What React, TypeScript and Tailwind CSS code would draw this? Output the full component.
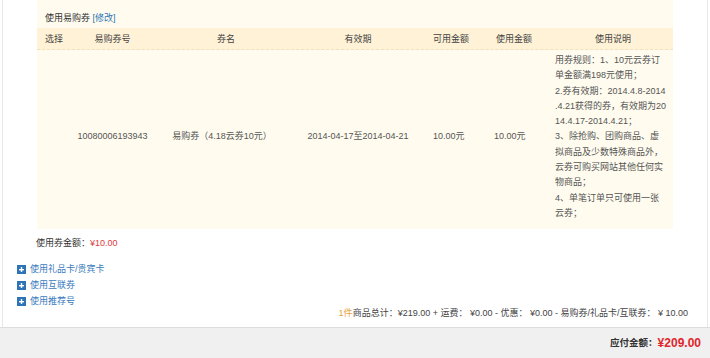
const descLines = [
  '用券规则：1、10元云券订',
  '单金额满198元使用；',
  '2.券有效期：2014.4.8-2014',
  '.4.21获得的券，有效期为20',
  '14.4.17-2014.4.21；',
  '3、除抢购、团购商品、虚',
  '拟商品及少数特殊商品外，',
  '云券可购买网站其他任何实',
  '物商品；',
  '4、单笔订单只可使用一张',
  '云券；',
];

const links = ['使用礼品卡/贵宾卡', '使用互联券', '使用推荐号'];

function PlusIcon() {
  return (
    <svg width="9" height="9" viewBox="0 0 9 9" className="shrink-0">
      <rect x="0" y="0" width="9" height="9" fill="#2c74b6" />
      <rect x="2" y="4" width="5" height="1.4" fill="#fff" />
      <rect x="3.8" y="2" width="1.4" height="5" fill="#fff" />
    </svg>
  );
}

export default function App() {
  return (
    <div
      className="w-[710px] h-[358px] bg-white overflow-hidden flex flex-col text-[9px] text-[#444]"
      style={{ fontFamily: '"Liberation Sans", "Noto Sans CJK SC", sans-serif' }}
    >
      <div className="flex-1 px-[2px]">
        <div className="h-full border-l border-r border-[#e8e8e8] flex flex-col">
          {/* Coupon box */}
          <div className="ml-[34px] w-[636px] bg-[#fffcef]">
            <div className="h-[28px] pt-[12px] pl-[8px] leading-[12px] text-[#333]">
              使用易购券 <span className="text-[#2f74b5]">[修改]</span>
            </div>

            {/* Header */}
            <div className="grid grid-cols-[38px_75px_152px_112px_63px_59px_137px] h-[22px] items-center bg-[#fff2d6] border-b border-dashed border-[#f0e2bd] leading-[12px] text-[#444]">
              <div className="pl-[8px]">选择</div>
              <div className="text-center">易购券号</div>
              <div className="text-center">券名</div>
              <div className="text-center">有效期</div>
              <div className="pl-[19px]">可用金额</div>
              <div className="pl-[19px]">使用金额</div>
              <div className="pl-[59px]">使用说明</div>
            </div>

            {/* Row */}
            <div className="grid grid-cols-[38px_75px_152px_112px_63px_59px_137px] items-center leading-[12px] text-[#555]">
              <div />
              <div className="text-center">10080006193943</div>
              <div className="text-center pr-[8px]">易购券（4.18云券10元）</div>
              <div className="text-center">2014-04-17至2014-04-21</div>
              <div className="pl-[19px]">10.00元</div>
              <div className="pl-[17px]">10.00元</div>
              <div className="pl-[19px] pt-[3px] pb-[1px] leading-[15.3px]">
                {descLines.map((line) => (
                  <div key={line} className="whitespace-nowrap">
                    {line}
                  </div>
                ))}
              </div>
            </div>
            <div className="h-[7px]" />
          </div>

          {/* Coupon total */}
          <div className="mt-[8px] ml-[33px] leading-[12px] text-[#333]">
            使用券金额：<span className="text-[#e03a3e]">¥10.00</span>
          </div>

          {/* Links */}
          <div className="mt-[12px] ml-[14px] flex flex-col">
            {links.map((label) => (
              <div key={label} className="h-[16px] flex items-center gap-[4px] text-[#3a7bbd]">
                <PlusIcon />
                <span className="leading-[12px]">{label}</span>
              </div>
            ))}
          </div>

          {/* Summary */}
          <div className="-mt-[2px] pr-[19px] text-right leading-[12px] text-[#444]">
            <span className="text-[#e6a23a]">1件</span>商品总计：¥219.00 + 运费： ¥0.00 - 优惠： ¥0.00 - 易购券/礼品卡/互联券： ¥ 10.00
          </div>
        </div>
      </div>

      {/* Pay bar */}
      <div className="h-[31px] shrink-0 bg-[#f0f0f0] border-t border-[#dddddd] flex items-center justify-end pr-[9px]">
        <span className="font-bold text-[#333] text-[9.5px]">应付金额：</span>
        <span className="font-bold text-[#e0252b] text-[12px]">¥209.00</span>
      </div>
    </div>
  );
}
